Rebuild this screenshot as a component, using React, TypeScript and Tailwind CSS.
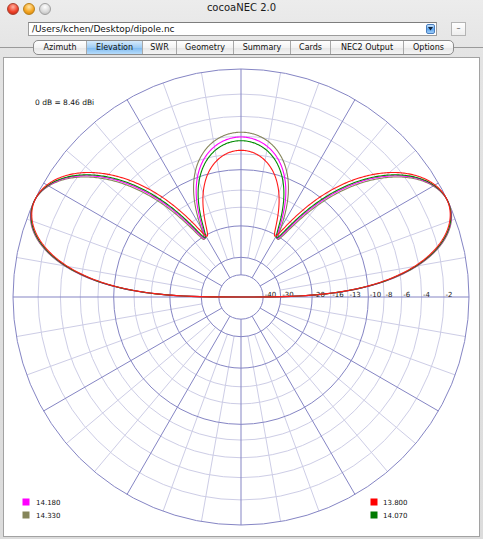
import React from "react";

const CX = 241;
const CY = 297;
const R = 228;
const arrl = (db: number) => R * Math.pow(0.89, -db / 2);

const RINGS: { db: number; dark: boolean }[] = [
  { db: -2, dark: false },
  { db: -4, dark: false },
  { db: -6, dark: false },
  { db: -8, dark: false },
  { db: -10, dark: true },
  { db: -13, dark: false },
  { db: -16, dark: false },
  { db: -20, dark: true },
  { db: -30, dark: true },
  { db: -40, dark: true },
];

const TRACES = [
  { f: 14.33, color: "#85855a" },
  { f: 14.18, color: "#ff00ff" },
  { f: 14.07, color: "#008a00" },
  { f: 13.8, color: "#ff1a1a" },
];

function field(f: number, thDeg: number) {
  const kh = 0.2602 * f;
  const s = Math.sin((thDeg * Math.PI) / 180);
  const rho = 1 - 0.21 * s;
  const x = kh * s;
  const e2 = 1 + rho * rho - 2 * rho * Math.cos(2 * x);
  return Math.sqrt(Math.max(e2, 0));
}

function buildTraces() {
  let M = 0;
  const raw = TRACES.map((t) => {
    const vals: number[] = [];
    for (let i = 0; i <= 720; i++) {
      const th = i * 0.25;
      const e = field(t.f, th);
      vals.push(e);
      if (e > M) M = e;
    }
    return vals;
  });
  return TRACES.map((t, k) => {
    const pts: string[] = [];
    raw[k].forEach((e, i) => {
      const th = (i * 0.25 * Math.PI) / 180;
      let r = 0;
      if (e > 1e-9) {
        const db = 20 * Math.log10(e / M);
        r = arrl(Math.max(db, -80));
      }
      const x = CX + r * Math.cos(th);
      const y = CY - r * Math.sin(th);
      pts.push(`${x.toFixed(2)},${y.toFixed(2)}`);
    });
    return { color: t.color, points: pts.join(" ") };
  });
}

const LABELS = [-40, -30, -20, -16, -13, -10, -8, -6, -4, -2];

function Plot() {
  const traces = buildTraces();
  const dark = "#8585c4";
  const light = "#cdcde6";
  const radials: React.ReactNode[] = [];
  for (let a = 0; a < 360; a += 10) {
    const isDark = a % 30 === 0;
    const rad = (a * Math.PI) / 180;
    const r0 = isDark ? arrl(-40) : arrl(-30);
    if (a === 0 || a === 180) continue;
    radials.push(
      <line
        key={a}
        x1={CX + r0 * Math.cos(rad)}
        y1={CY - r0 * Math.sin(rad)}
        x2={CX + R * Math.cos(rad)}
        y2={CY - R * Math.sin(rad)}
        stroke={isDark ? dark : light}
        strokeWidth={1}
      />
    );
  }
  return (
    <svg width={476} height={478} viewBox="4 58 476 478" className="block">
      {RINGS.filter((r) => !r.dark).map((r) => (
        <circle key={r.db} cx={CX} cy={CY} r={arrl(r.db)} fill="none" stroke={light} strokeWidth={1} />
      ))}
      {radials}
      {RINGS.filter((r) => r.dark).map((r) => (
        <circle key={r.db} cx={CX} cy={CY} r={arrl(r.db)} fill="none" stroke={dark} strokeWidth={1} />
      ))}
      <circle cx={CX} cy={CY} r={R} fill="none" stroke={dark} strokeWidth={1} />
      <line x1={CX - R} y1={CY} x2={CX + R} y2={CY} stroke={dark} strokeWidth={1} />
      {LABELS.map((d) => (
        <text
          key={d}
          x={CX + arrl(d) + 1.5}
          y={296.5}
          fontSize={7}
          fill="#222"
          fontFamily="'DejaVu Sans', sans-serif"
        >
          {d}
        </text>
      ))}
      {traces.map((t, i) => (
        <polyline key={i} points={t.points} fill="none" stroke={t.color} strokeWidth={1.1} strokeLinejoin="round" />
      ))}
      <text x={35} y={105} fontSize={7.5} fill="#111" fontFamily="'DejaVu Sans', sans-serif">
        0 dB = 8.46 dBi
      </text>
      <rect x={22.5} y={498.5} width={7} height={7} fill="#ff00ff" />
      <text x={36} y={505} fontSize={7} fill="#111" fontFamily="'DejaVu Sans', sans-serif">14.180</text>
      <rect x={22.5} y={511.5} width={7} height={7} fill="#85855a" />
      <text x={36} y={518} fontSize={7} fill="#111" fontFamily="'DejaVu Sans', sans-serif">14.330</text>
      <rect x={370.5} y={498.5} width={7} height={7} fill="#ff0000" />
      <text x={383} y={505} fontSize={7} fill="#111" fontFamily="'DejaVu Sans', sans-serif">13.800</text>
      <rect x={370.5} y={511.5} width={7} height={7} fill="#007a00" />
      <text x={383} y={518} fontSize={7} fill="#111" fontFamily="'DejaVu Sans', sans-serif">14.070</text>
    </svg>
  );
}

const TABS = [
  { name: "Azimuth", w: "w-[52px]" },
  { name: "Elevation", w: "w-[56px]", sel: true },
  { name: "SWR", w: "w-[34px]" },
  { name: "Geometry", w: "w-[57px]" },
  { name: "Summary", w: "w-[57px]" },
  { name: "Cards", w: "w-[40px]" },
  { name: "NEC2 Output", w: "w-[73px]" },
  { name: "Options", w: "w-[50px]" },
];

export default function App() {
  return (
    <div className="w-[483px] h-[539px] flex flex-col overflow-hidden bg-[linear-gradient(#ececec,#e3e3e3_60px,#dcdcdc)] font-['DejaVu_Sans',sans-serif] text-black">
      {/* Title bar */}
      <div className="h-[16px] grid grid-cols-[1fr_auto_1fr] items-center">
        <div className="flex items-center gap-[4px] pl-[7px] pt-[1px]">
          <span className="w-[12px] h-[12px] rounded-full border border-[#a8402e] bg-[radial-gradient(circle_at_50%_30%,#ffb3a3,#f0442c_55%,#b8200e)]" />
          <span className="w-[12px] h-[12px] rounded-full border border-[#b8801a] bg-[radial-gradient(circle_at_50%_30%,#ffe6a8,#f5a623_55%,#c97a06)]" />
          <span className="w-[12px] h-[12px] rounded-full border border-[#a0a0a0] bg-[radial-gradient(circle_at_50%_30%,#ffffff,#dadada_55%,#b4b4b4)]" />
        </div>
        <div className="text-[10px] leading-none text-[#1a1a1a]">cocoaNEC 2.0</div>
        <div />
      </div>
      {/* Path row */}
      <div className="mt-[6px] h-[14px] flex items-stretch pl-[28px]">
        <div className="w-[409px] flex items-center bg-white border border-[#9c9c9c] border-t-[#7d7d7d] pl-[3px] pr-[1px]">
          <span className="flex-1 text-[9px] leading-none text-[#111] whitespace-nowrap">/Users/kchen/Desktop/dipole.nc</span>
          <span className="w-[9px] h-[10px] rounded-[2px] border border-[#4a7fc0] bg-[linear-gradient(#cfe6fb,#5ea6ee_50%,#9ccbf7)] flex items-center justify-center">
            <svg width="5" height="4" viewBox="0 0 5 4">
              <path d="M0 0 L5 0 L2.5 3.5 Z" fill="#10233d" />
            </svg>
          </span>
        </div>
        <div className="ml-[14px] w-[15px] border border-[#b4b4b4] bg-[linear-gradient(#ffffff,#eeeeee)] flex items-center justify-center text-[8px] leading-none text-[#555]">
          –
        </div>
      </div>
      {/* Tabs row */}
      <div className="mt-[4px] h-[15px] flex items-center">
        <div className="w-[33px] h-px bg-[#9a9a9a]" />
        <div className="flex h-[15px] rounded-[5px] border border-[#8c8c8c] overflow-hidden bg-[linear-gradient(#ffffff,#f3f3f3_50%,#e6e6e6_51%,#f4f4f4)]">
          {TABS.map((t, i) => (
            <div
              key={t.name}
              className={`${t.w} ${i > 0 ? "border-l border-[#a8a8a8]" : ""} ${
                t.sel ? "bg-[linear-gradient(#d6ebfc,#9fcdf4_50%,#7db9ef_51%,#b6dcfb)]" : ""
              } flex items-center justify-center text-[8px] leading-none text-[#111] whitespace-nowrap`}
            >
              {t.name}
            </div>
          ))}
        </div>
        <div className="flex-1 h-px bg-[#9a9a9a]" />
      </div>
      {/* Content */}
      <div className="mt-[2px] mx-[3px] h-[480px] border border-[#a2a2a2] bg-white">
        <Plot />
      </div>
    </div>
  );
}
